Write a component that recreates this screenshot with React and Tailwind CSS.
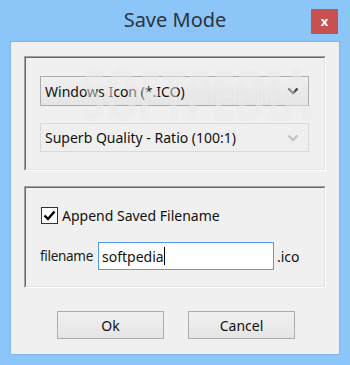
import React from "react";

const FONT = { fontFamily: '"Noto Sans", "Open Sans", sans-serif' };

const Chevron = ({ color }) => (
  <svg width="12" height="8" viewBox="0 0 12 8">
    <path d="M1.5 1.5 L6 6 L10.5 1.5" fill="none" stroke={color} strokeWidth="2.4" />
  </svg>
);

const GroupBox = ({ className, children }) => (
  <div className={`border border-t-[#a0a0a0] border-l-[#a0a0a0] border-r-white border-b-white ${className}`}>
    <div className="h-full border border-t-[#696969] border-l-[#696969] border-r-[#e3e3e3] border-b-[#e3e3e3]">
      {children}
    </div>
  </div>
);

const App = () => {
  return (
    <div className="w-[350px] h-[365px] bg-[#8cc6f8] px-[10px] flex flex-col text-[#111]" style={FONT}>

      {/* TITLE BAR */}
      <div className="h-[41px] relative flex items-center justify-center">
        <span className="text-[20px] text-[#2c3440] leading-none -mt-[1px]">Save Mode</span>
        <div className="absolute right-[2px] top-[9px] w-[27px] h-[25px] bg-[#c75050] flex items-center justify-center text-white text-[13px] font-bold leading-none">
          x
        </div>
      </div>

      {/* CLIENT */}
      <div className="h-[314px] border border-[#7fb6e6] bg-[#f0f0f0] px-[13px] pt-[14px] flex flex-col relative">

        {/* FORMAT GROUP */}
        <GroupBox className="h-[115px]">
          <div className="pl-[14px] pt-[18px] flex flex-col gap-[17px]">
            <div className="w-[269px] h-[30px] border border-[#acacac] bg-gradient-to-b from-[#f0f0f0] to-[#e5e5e5] flex items-center justify-between pl-[4px] pr-[9px] text-[14px]">
              <span>Windows Icon (*.ICO)</span>
              <Chevron color="#404040" />
            </div>
            <div className="w-[269px] h-[29px] border border-[#d9d9d9] bg-[#efefef] flex items-center justify-between pl-[4px] pr-[9px] text-[14px]">
              <span>Superb Quality - Ratio (100:1)</span>
              <Chevron color="#c4c4c4" />
            </div>
          </div>
        </GroupBox>

        {/* FILENAME GROUP */}
        <GroupBox className="h-[102px] mt-[15px]">
          <div className="pl-[15px] pt-[17px] flex flex-col">
            <label className="flex items-center gap-[4px] text-[14px]">
              <span className="w-[17px] h-[17px] border border-[#333] bg-white flex items-center justify-center">
                <svg width="13" height="11" viewBox="0 0 13 11">
                  <path d="M1.5 5.5 L5 9 L11.5 1.5" fill="none" stroke="#000" strokeWidth="2.4" />
                </svg>
              </span>
              <span>Append Saved Filename</span>
            </label>
            <div className="flex items-center mt-[16px] text-[14px]">
              <span className="w-[58px] -ml-[1px] text-[13.5px] tracking-[-0.3px] text-[#1a1a1a] whitespace-nowrap">filename</span>
              <div className="w-[176px] h-[28px] border border-[#569de5] bg-white flex items-center pl-[3px]">
                <span>softpedia</span>
                <span className="w-[1px] h-[18px] bg-black" />
              </div>
              <span className="ml-[3px]">.ico</span>
            </div>
          </div>
        </GroupBox>

        {/* BUTTONS */}
        <div className="flex gap-[24px] mt-[23px] pl-[33px] text-[14px]">
          <button className="w-[107px] h-[28px] border border-[#acacac] bg-gradient-to-b from-[#f0f0f0] to-[#e5e5e5]">Ok</button>
          <button className="w-[107px] h-[28px] border border-[#acacac] bg-gradient-to-b from-[#f0f0f0] to-[#e5e5e5]">Cancel</button>
        </div>

        {/* WATERMARK */}
        <div aria-hidden="true" className="absolute left-[11px] top-[16px] w-[300px] text-center text-[70px] leading-none font-bold text-white/45 scale-x-[0.6] pointer-events-none select-none" style={{ textShadow: "0 0 2px rgba(0,0,0,0.08)" }}>
          SOFTPEDIA
        </div>
      </div>
    </div>
  );
};

export default App;
